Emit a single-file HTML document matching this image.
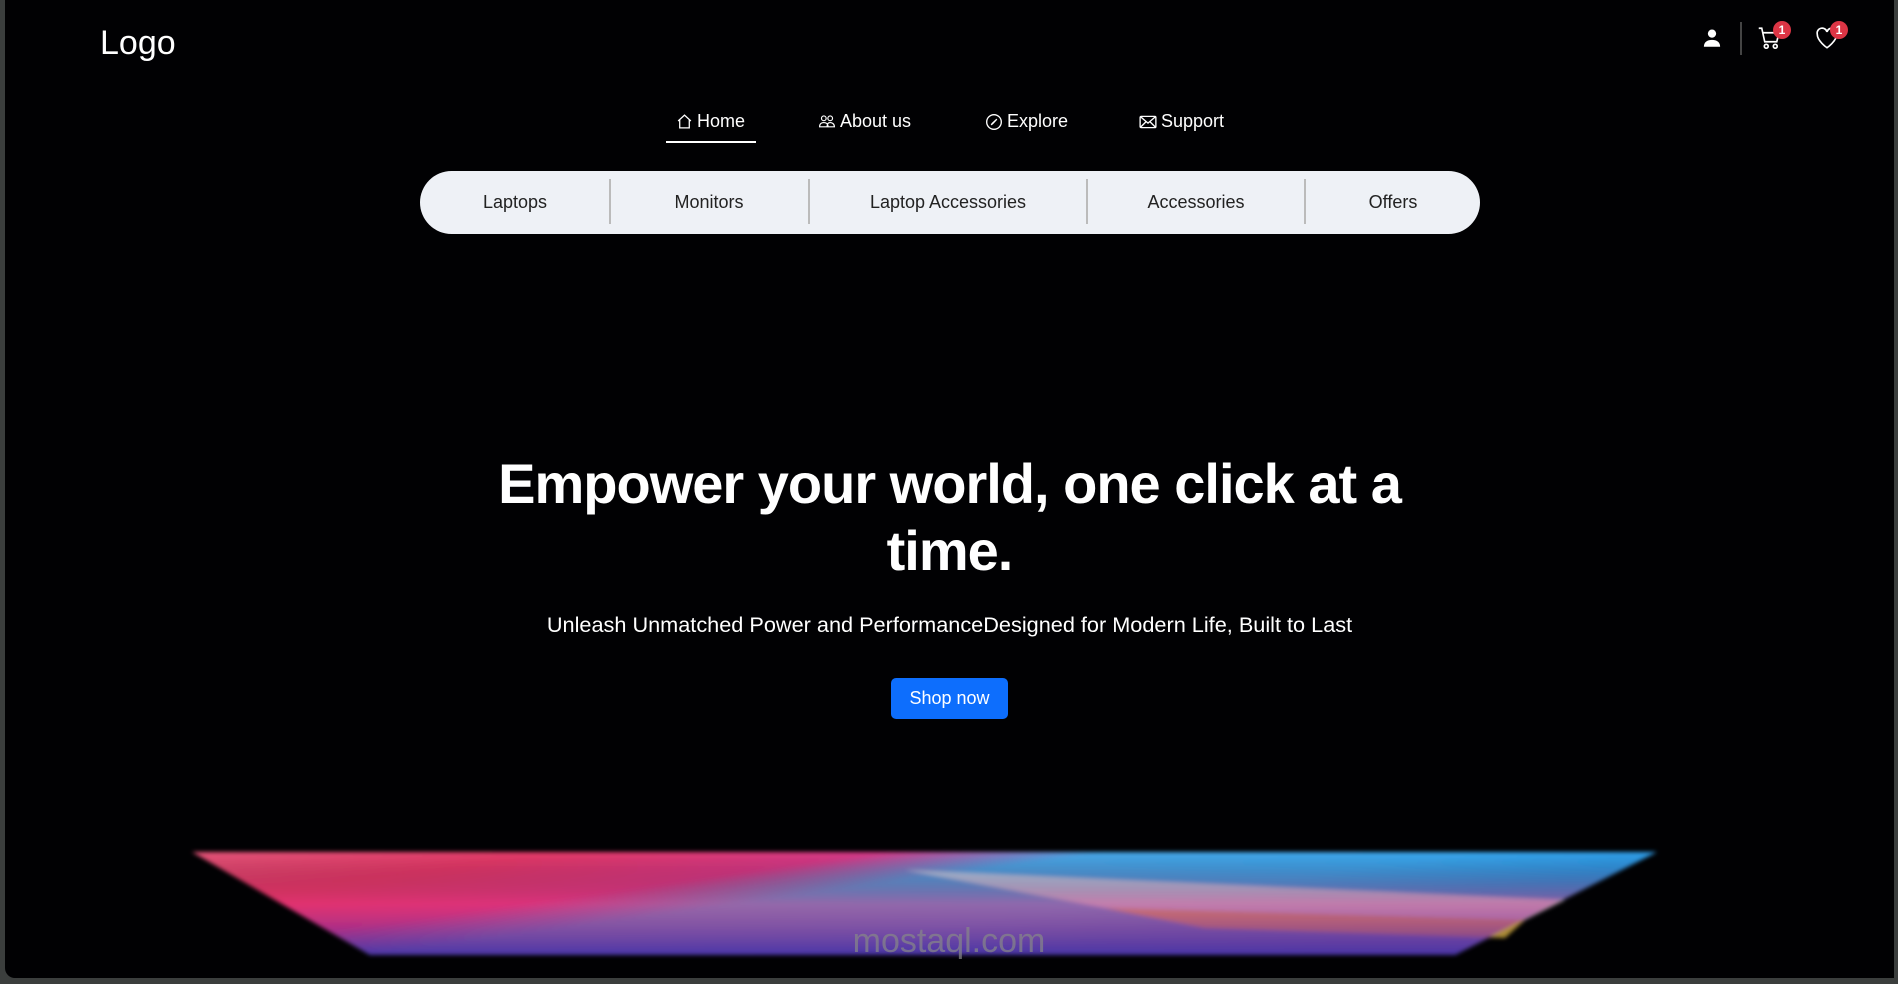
<!DOCTYPE html>
<html><head><meta charset="utf-8"><style>
*{margin:0;padding:0;box-sizing:border-box}
html,body{width:1898px;height:984px;overflow:hidden;background:#3b3e3d;font-family:"Liberation Sans",sans-serif}
#main{position:absolute;left:5px;top:0;width:1889px;height:978px;background:#010103;border-radius:0 0 0 10px;overflow:hidden}
.abs{position:absolute}
.logo{left:95px;top:24px;color:#fff;font-size:34px}
.nav a{position:absolute;top:111px;color:#fff;font-size:18px;text-decoration:none;display:flex;align-items:center;gap:4px}
.pill{left:415px;top:171px;width:1060px;height:63px;background:#eef1f6;border-radius:32px}
.pill span{position:absolute;top:0;line-height:63px;font-size:18px;color:#222;transform:translateX(-50%)}
.pill i{position:absolute;top:8px;width:2px;height:45px;background:#bbb}
.h{left:0;width:1889px;text-align:center;color:#fff;font-weight:bold;font-size:56px;letter-spacing:-1px}
.sub{left:0;width:1889px;top:612px;text-align:center;color:#fff;font-size:21.7px}
.btn{left:886px;top:678px;width:117px;height:41px;background:#0d6efd;color:#fff;border-radius:5px;font-size:18px;text-align:center;line-height:41px}
.badge{position:absolute;width:18px;height:18px;border-radius:9px;background:#dc3545;color:#fff;font-size:12px;font-weight:bold;text-align:center;line-height:18px}
</style></head><body>
<div id="main">
<div class="abs logo">Logo</div>
<svg class="abs" style="left:1697px;top:28px" width="20" height="20" viewBox="0 0 16 16" fill="#fff"><circle cx="8" cy="4.5" r="3.3"/><path d="M1.5 15c0-4 3-5.5 6.5-5.5s6.5 1.5 6.5 5.5z"/></svg>
<div class="abs" style="left:1735px;top:22px;width:2px;height:33px;background:#444"></div>
<svg class="abs" style="left:1753px;top:26px" width="24" height="24" viewBox="0 0 16 16" fill="none" stroke="#fff" stroke-width="1.1"><path d="M0.5 1.5h2l2 9h8l1.5-6H3.5"/><circle cx="5.5" cy="13.5" r="1.3"/><circle cx="11.5" cy="13.5" r="1.3"/></svg>
<div class="badge" style="left:1768px;top:21px">1</div>
<svg class="abs" style="left:1810px;top:26px" width="24" height="24" viewBox="0 0 16 16" fill="none" stroke="#fff" stroke-width="1.1"><path d="M8 14.5S1.5 10 1.5 5.5A3.2 3.2 0 0 1 8 4a3.2 3.2 0 0 1 6.5 1.5C14.5 10 8 14.5 8 14.5z"/></svg>
<div class="badge" style="left:1825px;top:21px">1</div>
<div class="nav">
<a style="left:671px"><svg width="17" height="17" viewBox="0 0 16 16" fill="none" stroke="#fff" stroke-width="1.2"><path d="M2 7.5 8 2l6 5.5M3.5 6.5V14h9V6.5"/></svg>Home</a>
<div class="abs" style="left:661px;top:141px;width:90px;height:2px;background:#fff"></div>
<a style="left:813px"><svg width="18" height="17" viewBox="0 0 16 16" fill="none" stroke="#fff" stroke-width="1.1"><circle cx="5" cy="5" r="2.2"/><circle cx="11" cy="5" r="2.2"/><path d="M1 13c0-3 2-4 4-4s4 1 4 4zM8 13c0-3 1.5-4 3-4s4 1 4 4H9"/></svg>About us</a>
<a style="left:980px"><svg width="18" height="18" viewBox="0 0 16 16" fill="none" stroke="#fff" stroke-width="1.2"><circle cx="8" cy="8" r="6.5"/><path d="M10.5 5.5 7 9.2l-1.5 1.3 1.3-1.5z" fill="#fff"/></svg>Explore</a>
<a style="left:1134px"><svg width="18" height="16" viewBox="0 0 16 14" fill="none" stroke="#fff" stroke-width="1.2"><rect x="1" y="2" width="14" height="10" rx="1"/><path d="M1 2l7 6 7-6M1 12l5-5M15 12l-5-5"/></svg>Support</a>
</div>
<div class="abs pill">
<span style="left:95px">Laptops</span><i style="left:189px"></i>
<span style="left:289px">Monitors</span><i style="left:388px"></i>
<span style="left:528px">Laptop Accessories</span><i style="left:666px"></i>
<span style="left:776px">Accessories</span><i style="left:884px"></i>
<span style="left:973px">Offers</span>
</div>
<div class="abs h" style="top:451px">Empower your world, one click at a</div>
<div class="abs h" style="top:518px">time.</div>
<div class="abs sub">Unleash Unmatched Power and PerformanceDesigned for Modern Life, Built to Last</div>
<div class="abs btn">Shop now</div>
<svg class="abs" style="left:0;top:820px" width="1889" height="160">
<defs>
<linearGradient id="g" x1="0" y1="0" x2="1" y2="0.5">
<stop offset="0" stop-color="#e8557a"/><stop offset="0.2" stop-color="#e83a6a"/><stop offset="0.38" stop-color="#d93a8a"/><stop offset="0.5" stop-color="#49a8ea"/><stop offset="0.7" stop-color="#3aa8f0"/><stop offset="0.85" stop-color="#2a9ae8"/><stop offset="1" stop-color="#2a8ee0"/>
</linearGradient>
<linearGradient id="g2" x1="0" y1="0" x2="0" y2="1">
<stop offset="0" stop-color="#000" stop-opacity="0"/><stop offset="0.5" stop-color="#e02a6a" stop-opacity="0.5"/><stop offset="1" stop-color="#4a2aa0" stop-opacity="0.9"/>
</linearGradient>
<filter id="b"><feGaussianBlur stdDeviation="2"/></filter>
</defs>
<g filter="url(#b)">
<polygon points="187,32 1652,32 1450,135 365,135" fill="url(#g)"/>
<polygon points="900,50 1560,80 1520,100 1100,88" fill="#f0f0f0" opacity="0.6"/>
<polygon points="1100,88 1520,100 1500,118 1200,108" fill="#f4c64a" opacity="0.7"/>
<polygon points="187,32 1652,32 1450,135 365,135" fill="url(#g2)"/>
</g>
<text x="944" y="132" text-anchor="middle" font-family="Liberation Sans" font-size="34" fill="#888" opacity="0.7">mostaql.com</text>
</svg>
</div>
</body></html>
